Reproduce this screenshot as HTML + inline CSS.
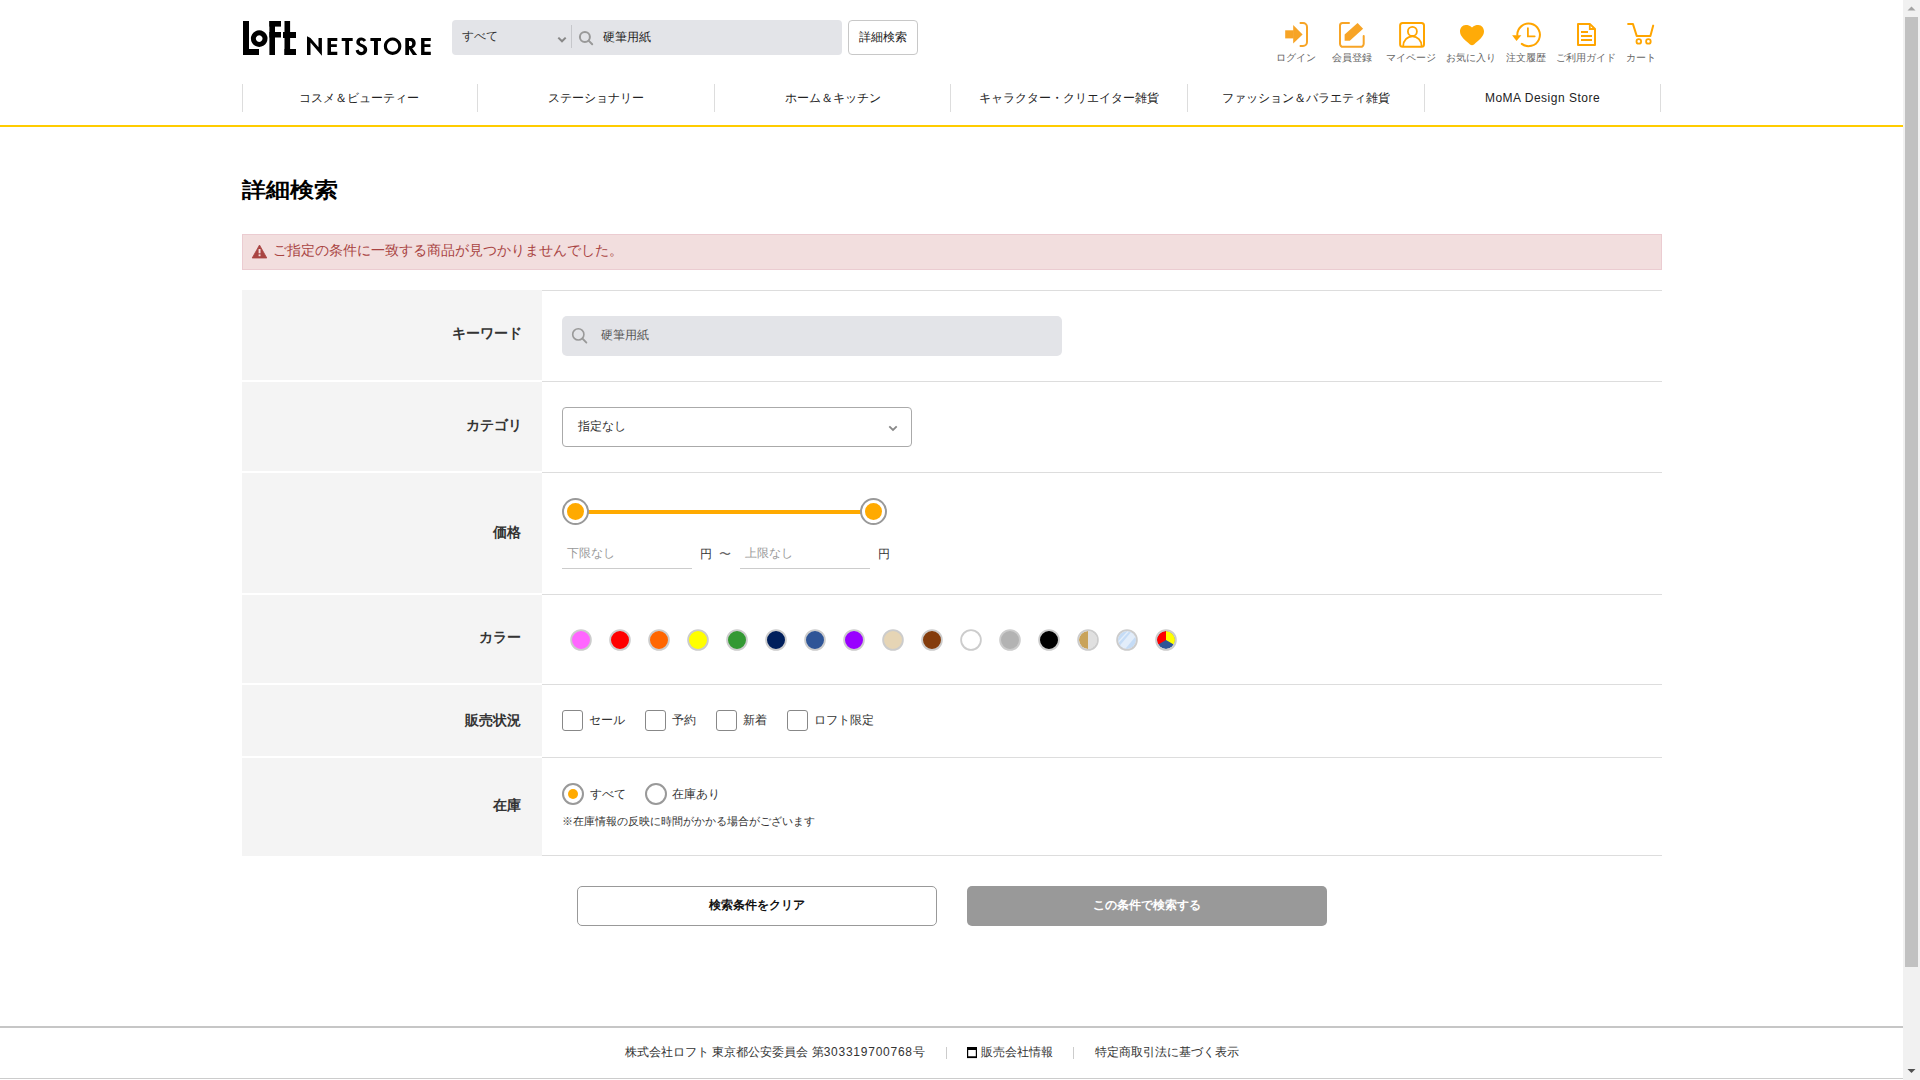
<!DOCTYPE html>
<html lang="ja">
<head>
<meta charset="utf-8">
<title>詳細検索 | ロフト公式通販サイト</title>
<style>
html,body{margin:0;padding:0;width:1920px;height:1080px;overflow:hidden;background:#fff;}
body{position:relative;font-family:"Liberation Sans",sans-serif;color:#333;}
.a{position:absolute;}
.t{position:absolute;white-space:nowrap;line-height:1;}
.c{text-align:center;}
svg{position:absolute;overflow:visible;}
</style>
</head>
<body>

<!-- ===== HEADER ===== -->
<svg id="logo" style="left:0;top:0" width="1" height="1">
  <g fill="#000">
    <!-- L -->
    <rect x="243" y="21" width="6" height="34"/>
    <rect x="243" y="49" width="16" height="6"/>
    <!-- o -->
    <path fill-rule="evenodd" d="M259.2,30.3a8.3,8.3 0 1 0 0.01,0z M259.2,35.3a3.3,3.3 0 1 1 -0.01,0z"/>
    <!-- F -->
    <rect x="269.4" y="21" width="5.6" height="34"/>
    <rect x="269.4" y="21" width="11.6" height="5.6"/>
    <rect x="269.4" y="32" width="11.6" height="5.5"/>
    <!-- t -->
    <rect x="284.5" y="21" width="5.6" height="34"/>
    <rect x="283" y="32" width="13" height="6"/>
    <rect x="284.5" y="49" width="11.5" height="6"/>
    <!-- N -->
    <path d="M307,36.3 L310.5,37.9 L318.5,47.3 V37.9 H321.9 V55.8 L310.5,42.6 V54.9 H307 Z"/>
    <!-- E -->
    <path d="M327.5,37.9 H337.3 V41 H331 V44.3 H336.8 V47.1 H331 V51.7 H337.3 V54.9 H327.5 Z"/>
    <!-- T -->
    <path d="M341.7,37.9 H352.7 V41.1 H349 V54.9 H345.3 V41.1 H341.7 Z"/>
    <!-- S -->
    <path d="M366.2,40.2 C364.8,38.4 363.2,37.5 361.3,37.5 C358.3,37.5 356.3,39.4 356.3,42 C356.3,44.5 358,45.6 360.6,46.7 C362.6,47.5 363.6,48.2 363.6,49.7 C363.6,51 362.6,52 361.3,52 C359.8,52 358.9,51 358.6,49.5 L355.6,50.4 C356.2,53.3 358.4,55.2 361.3,55.2 C364.8,55.2 367.2,53 367.2,49.6 C367.2,46.9 365.6,45.5 362.6,44.2 C360.6,43.4 359.9,42.8 359.9,41.9 C359.9,41.1 360.5,40.5 361.4,40.5 C362.3,40.5 363,40.9 363.7,41.8 Z"/>
    <!-- T -->
    <path d="M370.4,37.9 H381 V41.1 H377.9 V54.9 H374 V41.1 H370.4 Z"/>
    <!-- O -->
    <path fill-rule="evenodd" d="M392.6,37.5a8.75,8.7 0 1 0 0.01,0z M392.6,40.6a5.6,5.6 0 1 1 -0.01,0z"/>
    <!-- R -->
    <path fill-rule="evenodd" d="M405.3,37.9 H410.5 C413.8,37.9 415.7,39.9 415.7,43.2 C415.7,45.8 414.3,47.6 412.2,48.2 L417.2,54.9 H412.9 L409,49 V54.9 H405.3 Z M409,40.9 V46.1 H409.8 C411.5,46.1 412.2,45.2 412.2,43.5 C412.2,41.8 411.5,40.9 409.8,40.9 Z"/>
    <!-- E -->
    <path d="M421.1,37.9 H430.8 V41 H424.5 V44.3 H430.4 V46.9 H424.5 V51.7 H430.8 V54.9 H421.1 Z"/>
  </g>
</svg>

<div class="a" style="left:452px;top:20px;width:390px;height:35px;background:#e3e4e8;border-radius:4px;"></div>
<div class="t" id="h-all" style="left:462px;top:30px;font-size:12px;color:#333;">すべて</div>
<svg style="left:0;top:0" width="1" height="1">
  <path d="M558.3,37.6 L562,41.3 L565.7,37.6" fill="none" stroke="#888" stroke-width="2"/>
  <rect x="571" y="25" width="1" height="23" fill="#c6c7cb"/>
  <circle cx="584.9" cy="36.9" r="5" fill="none" stroke="#999" stroke-width="2"/>
  <path d="M588.6,40.6 L592.2,44.2" stroke="#999" stroke-width="2" stroke-linecap="round"/>
</svg>
<div class="t" id="h-kw" style="left:603px;top:31px;font-size:12px;color:#222;">硬筆用紙</div>

<div class="a" style="left:848px;top:20px;width:68px;height:33px;border:1px solid #c8c8c8;border-radius:4px;background:#fff;"></div>
<div class="t" id="h-btn" style="left:859px;top:31px;font-size:12px;color:#222;">詳細検索</div>

<!-- header icons -->
<svg style="left:0;top:0" width="1" height="1">
  <g fill="#f7a426">
    <rect x="1285.2" y="30.3" width="8.5" height="8.1"/>
    <path d="M1293.2,25 L1302.6,34.4 L1293.2,43.6 Z"/>
  </g>
  <path d="M1299.7,23 H1303 A4,4 0 0 1 1307,27 V41.9 A4,4 0 0 1 1303,45.9 H1299.7" fill="none" stroke="#f7a426" stroke-width="2"/>

  <path d="M1349,23 H1342.5 A2.5,2.5 0 0 0 1340,25.5 V43.8 A3,3 0 0 0 1343,46.8 H1360.7 A3,3 0 0 0 1363.7,43.8 V36" fill="none" stroke="#f7a426" stroke-width="2" stroke-linecap="round"/>
  <path d="M1344.6,34.6 L1357.6,23 L1363.1,28.8 L1349.8,40.7 L1344.6,40.7 Z" fill="#f7a426"/>

  <rect x="1400.1" y="23" width="23.9" height="23.8" rx="2.5" fill="none" stroke="#ffa500" stroke-width="2"/>
  <circle cx="1412.4" cy="31.4" r="4.5" fill="none" stroke="#ffa500" stroke-width="1.8"/>
  <path d="M1403.2,46 A9.2,9.7 0 0 1 1421.6,46" fill="none" stroke="#ffa500" stroke-width="1.8"/>

  <path d="M1472,27.6 C1470,25.6 1467.8,25 1465.8,25 C1462.2,25 1460,28.2 1460,31.6 C1460,36.2 1465,40.6 1470,44.4 Q1472,45.9 1474,44.4 C1479,40.6 1484,36.2 1484,31.6 C1484,28.2 1481.8,25 1478.2,25 C1476.2,25 1474,25.6 1472,27.6 Z" fill="#ffab08"/>

  <path d="M1517.3,35 A11.3,11.3 0 1 1 1521.8,43.9" fill="none" stroke="#ffa500" stroke-width="2" stroke-linecap="round"/>
  <path d="M1512.1,35.3 L1521.4,35.3 L1516.5,40.9 Z" fill="#ffa500"/>
  <path d="M1527.9,28.2 V36.3 H1534.7" fill="none" stroke="#ffa500" stroke-width="1.8" stroke-linecap="round"/>

  <path d="M1578,23.9 H1589.8 L1595,29 V44.9 H1578 Z" fill="none" stroke="#ffa500" stroke-width="2" stroke-linejoin="round"/>
  <path d="M1589.8,23.9 V29 H1595" fill="none" stroke="#ffa500" stroke-width="1.8"/>
  <g stroke="#ffa500" stroke-width="2">
    <path d="M1581,32 H1588"/><path d="M1581,36 H1592"/><path d="M1581,40 H1592"/>
  </g>

  <path d="M1628.1,23.9 H1632.9 L1636.7,35.9 H1650.4 L1653.2,25.6" fill="none" stroke="#ffa500" stroke-width="2" stroke-linejoin="round" stroke-linecap="round"/>
  <circle cx="1638.8" cy="41.4" r="2.3" fill="none" stroke="#ffa500" stroke-width="1.8"/>
  <circle cx="1648.4" cy="41.4" r="2.3" fill="none" stroke="#ffa500" stroke-width="1.8"/>
</svg>
<div class="t c" style="left:1256px;width:80px;top:53px;font-size:10px;color:#666;">ログイン</div>
<div class="t c" style="left:1312px;width:80px;top:53px;font-size:10px;color:#666;">会員登録</div>
<div class="t c" style="left:1371px;width:80px;top:53px;font-size:10px;color:#666;">マイページ</div>
<div class="t c" style="left:1431px;width:80px;top:53px;font-size:10px;color:#666;">お気に入り</div>
<div class="t c" style="left:1486px;width:80px;top:53px;font-size:10px;color:#666;">注文履歴</div>
<div class="t c" style="left:1546px;width:80px;top:53px;font-size:10px;color:#666;">ご利用ガイド</div>
<div class="t c" style="left:1601px;width:80px;top:53px;font-size:10px;color:#666;">カート</div>

<!-- NAV -->
<div class="a" style="left:242px;top:84px;width:1px;height:28px;background:#ddd;"></div>
<div class="a" style="left:477px;top:84px;width:1px;height:28px;background:#ddd;"></div>
<div class="a" style="left:714px;top:84px;width:1px;height:28px;background:#ddd;"></div>
<div class="a" style="left:950px;top:84px;width:1px;height:28px;background:#ddd;"></div>
<div class="a" style="left:1187px;top:84px;width:1px;height:28px;background:#ddd;"></div>
<div class="a" style="left:1424px;top:84px;width:1px;height:28px;background:#ddd;"></div>
<div class="a" style="left:1660px;top:84px;width:1px;height:28px;background:#ddd;"></div>
<div class="t c" style="left:241px;width:236px;top:92px;font-size:12px;color:#222;">コスメ＆ビューティー</div>
<div class="t c" style="left:477px;width:238px;top:92px;font-size:12px;color:#222;">ステーショナリー</div>
<div class="t c" style="left:714px;width:237px;top:92px;font-size:12px;color:#222;">ホーム＆キッチン</div>
<div class="t c" style="left:950px;width:238px;top:92px;font-size:12px;color:#222;">キャラクター・クリエイター雑貨</div>
<div class="t c" style="left:1187px;width:238px;top:92px;font-size:12px;color:#222;">ファッション＆バラエティ雑貨</div>
<div class="t c" style="left:1424px;width:237px;top:92px;font-size:12px;color:#222;letter-spacing:0.5px;">MoMA Design Store</div>
<div class="a" style="left:0;top:125px;width:1903px;height:2px;background:#ffcc00;"></div>

<!-- TITLE -->
<div class="t" id="title" style="left:242px;top:179px;font-size:24px;font-weight:bold;color:#000;transform:scaleY(0.875);transform-origin:0 0;">詳細検索</div>

<!-- ALERT -->
<div class="a" style="left:242px;top:234px;width:1418px;height:34px;background:#f2dede;border:1px solid #ebccd1;"></div>
<svg style="left:0;top:0" width="1" height="1">
  <path d="M259.5,245 L266.8,258 H252.2 Z" fill="#a94442" stroke="#a94442" stroke-width="0.8" stroke-linejoin="round"/>
  <rect x="258.6" y="249" width="1.9" height="4.3" fill="#f2dede"/>
  <rect x="258.6" y="254.4" width="1.9" height="1.8" fill="#f2dede"/>
</svg>
<div class="t" id="alert" style="left:273px;top:243px;font-size:14px;color:#a94442;">ご指定の条件に一致する商品が見つかりませんでした。</div>

<!-- TABLE -->
<div class="a" style="left:242px;top:290px;width:300px;height:90px;background:#f4f4f4;"></div>
<div class="a" style="left:242px;top:382px;width:300px;height:89px;background:#f4f4f4;"></div>
<div class="a" style="left:242px;top:473px;width:300px;height:120px;background:#f4f4f4;"></div>
<div class="a" style="left:242px;top:595px;width:300px;height:88px;background:#f4f4f4;"></div>
<div class="a" style="left:242px;top:685px;width:300px;height:71px;background:#f4f4f4;"></div>
<div class="a" style="left:242px;top:758px;width:300px;height:98px;background:#f4f4f4;"></div>
<div class="a" style="left:542px;top:290px;width:1120px;height:1px;background:#ddd;"></div>
<div class="a" style="left:542px;top:381px;width:1120px;height:1px;background:#ddd;"></div>
<div class="a" style="left:542px;top:472px;width:1120px;height:1px;background:#ddd;"></div>
<div class="a" style="left:542px;top:594px;width:1120px;height:1px;background:#ddd;"></div>
<div class="a" style="left:542px;top:684px;width:1120px;height:1px;background:#ddd;"></div>
<div class="a" style="left:542px;top:757px;width:1120px;height:1px;background:#ddd;"></div>
<div class="a" style="left:542px;top:855px;width:1120px;height:1px;background:#ddd;"></div>
<div class="t" style="right:1398px;top:326px;font-size:14px;font-weight:bold;color:#333;text-align:right;">キーワード</div>
<div class="t" style="right:1398px;top:418px;font-size:14px;font-weight:bold;color:#333;text-align:right;">カテゴリ</div>
<div class="t" style="right:1399px;top:525px;font-size:14px;font-weight:bold;color:#333;text-align:right;">価格</div>
<div class="t" style="right:1399px;top:630px;font-size:14px;font-weight:bold;color:#333;text-align:right;">カラー</div>
<div class="t" style="right:1399px;top:713px;font-size:14px;font-weight:bold;color:#333;text-align:right;">販売状況</div>
<div class="t" style="right:1399px;top:798px;font-size:14px;font-weight:bold;color:#333;text-align:right;">在庫</div>

<!-- ROW1 keyword -->
<div class="a" style="left:562px;top:316px;width:500px;height:40px;background:#e3e4e8;border-radius:5px;"></div>
<svg style="left:0;top:0" width="1" height="1">
  <circle cx="578.3" cy="334.4" r="5.6" fill="none" stroke="#999" stroke-width="1.6"/>
  <path d="M582.4,338.5 L586.4,342.6" stroke="#999" stroke-width="1.8" stroke-linecap="round"/>
</svg>
<div class="t" id="kw2" style="left:601px;top:329px;font-size:12px;color:#555;">硬筆用紙</div>

<!-- ROW2 category -->
<div class="a" style="left:562px;top:407px;width:348px;height:38px;border:1px solid #aaa;border-radius:4px;background:#fff;"></div>
<div class="t" id="cat" style="left:578px;top:420px;font-size:12px;color:#333;">指定なし</div>
<svg style="left:0;top:0" width="1" height="1">
  <path d="M889.3,426.3 L893,430 L896.7,426.3" fill="none" stroke="#888" stroke-width="1.8"/>
</svg>

<!-- ROW3 price -->
<div class="a" style="left:575px;top:510px;width:299px;height:4px;background:#ffaa00;"></div>
<div class="a" style="left:562px;top:498px;width:23px;height:23px;border:2px solid #999;border-radius:50%;background:#fff;"></div>
<div class="a" style="left:567px;top:503px;width:17px;height:17px;border-radius:50%;background:#ffaa00;"></div>
<div class="a" style="left:860px;top:498px;width:23px;height:23px;border:2px solid #999;border-radius:50%;background:#fff;"></div>
<div class="a" style="left:865px;top:503px;width:17px;height:17px;border-radius:50%;background:#ffaa00;"></div>
<div class="a" style="left:562px;top:568px;width:130px;height:1px;background:#ccc;"></div>
<div class="a" style="left:740px;top:568px;width:130px;height:1px;background:#ccc;"></div>
<div class="t" id="pmin" style="left:567px;top:547px;font-size:12px;color:#999;">下限なし</div>
<div class="t" style="left:700px;top:548px;font-size:12px;color:#333;">円</div>
<div class="t" style="left:719px;top:548px;font-size:12px;color:#666;">〜</div>
<div class="t" id="pmax" style="left:745px;top:547px;font-size:12px;color:#999;">上限なし</div>
<div class="t" style="left:878px;top:548px;font-size:12px;color:#333;">円</div>

<!-- ROW4 colors -->
<svg style="left:0;top:0" width="1" height="1">
  <defs>
    <clipPath id="sw14"><circle cx="1088" cy="640" r="9"/></clipPath>
    <clipPath id="sw15"><circle cx="1127" cy="640" r="9"/></clipPath>
    <clipPath id="sw16"><circle cx="1166" cy="640" r="9"/></clipPath>
  </defs>
  <g stroke="#cccccc" stroke-width="1.8">
    <circle cx="581" cy="640" r="9.9" fill="#ff66ff"/>
    <circle cx="620" cy="640" r="9.9" fill="#ff0000"/>
    <circle cx="659" cy="640" r="9.9" fill="#ff6600"/>
    <circle cx="698" cy="640" r="9.9" fill="#ffff00"/>
    <circle cx="737" cy="640" r="9.9" fill="#339933"/>
    <circle cx="776" cy="640" r="9.9" fill="#001f5c"/>
    <circle cx="815" cy="640" r="9.9" fill="#2f5597"/>
    <circle cx="854" cy="640" r="9.9" fill="#9900ff"/>
    <circle cx="893" cy="640" r="9.9" fill="#e6d5b5"/>
    <circle cx="932" cy="640" r="9.9" fill="#843c0c"/>
    <circle cx="971" cy="640" r="9.9" fill="#ffffff"/>
    <circle cx="1010" cy="640" r="9.9" fill="#b3b3b3"/>
    <circle cx="1049" cy="640" r="9.9" fill="#000000"/>
  </g>
  <g clip-path="url(#sw14)">
    <rect x="1078" y="630" width="10" height="20" fill="#c9a35a"/>
    <rect x="1088" y="630" width="10" height="20" fill="#e0e0e0"/>
  </g>
  <g clip-path="url(#sw15)">
    <rect x="1117" y="630" width="20" height="20" fill="#c5dcf6"/>
    <path d="M1110,651 L1137,622" stroke="#e4eefa" stroke-width="1.4"/>
    <path d="M1112.6,659.2 L1143.6,621.9" stroke="#e2edfa" stroke-width="6.3"/>
  </g>
  <g clip-path="url(#sw16)">
    <rect x="1156" y="630" width="20" height="20" fill="#2f5597"/>
    <path d="M1166,640 L1166,628 L1154,628 L1154,647 Z" fill="#ff0000"/>
    <path d="M1166,640 L1166,628 L1178,628 L1178,647 Z" fill="#ffff00"/>
  </g>
  <g fill="none" stroke="#cccccc" stroke-width="1.8">
    <circle cx="1088" cy="640" r="9.9"/>
    <circle cx="1127" cy="640" r="9.9"/>
    <circle cx="1166" cy="640" r="9.9"/>
  </g>
</svg>

<!-- ROW5 checkboxes -->
<div class="a" style="left:562px;top:710px;width:19px;height:19px;border:1px solid #888;border-radius:3px;background:#fff;"></div>
<div class="a" style="left:645px;top:710px;width:19px;height:19px;border:1px solid #888;border-radius:3px;background:#fff;"></div>
<div class="a" style="left:716px;top:710px;width:19px;height:19px;border:1px solid #888;border-radius:3px;background:#fff;"></div>
<div class="a" style="left:787px;top:710px;width:19px;height:19px;border:1px solid #888;border-radius:3px;background:#fff;"></div>
<div class="t" id="cb1" style="left:589px;top:714px;font-size:12px;color:#333;">セール</div>
<div class="t" style="left:672px;top:714px;font-size:12px;color:#333;">予約</div>
<div class="t" style="left:743px;top:714px;font-size:12px;color:#333;">新着</div>
<div class="t" style="left:814px;top:714px;font-size:12px;color:#333;">ロフト限定</div>

<!-- ROW6 stock -->
<div class="a" style="left:562px;top:783px;width:18px;height:18px;border:2px solid #999;border-radius:50%;background:#fff;"></div>
<div class="a" style="left:568px;top:789px;width:10px;height:10px;border-radius:50%;background:#ffaa00;"></div>
<div class="a" style="left:645px;top:783px;width:18px;height:18px;border:2px solid #999;border-radius:50%;background:#fff;"></div>
<div class="t" id="rd1" style="left:590px;top:788px;font-size:12px;color:#333;">すべて</div>
<div class="t" style="left:672px;top:788px;font-size:12px;color:#333;">在庫あり</div>
<div class="t" id="note" style="left:562px;top:816px;font-size:11px;color:#333;">※在庫情報の反映に時間がかかる場合がございます</div>

<!-- BUTTONS -->
<div class="a" style="left:577px;top:886px;width:358px;height:38px;border:1px solid #999;border-radius:5px;background:#fff;"></div>
<div class="t c" id="btn1" style="left:577px;width:360px;top:899px;font-size:12px;font-weight:bold;color:#111;">検索条件をクリア</div>
<div class="a" style="left:967px;top:886px;width:360px;height:40px;border-radius:5px;background:#999;"></div>
<div class="t c" id="btn2" style="left:967px;width:360px;top:899px;font-size:12px;font-weight:bold;color:#fff;">この条件で検索する</div>

<!-- FOOTER -->
<div class="a" style="left:0;top:1026px;width:1903px;height:2px;background:#c6c6c6;"></div>
<div class="t" id="ft1" style="left:625px;top:1046px;font-size:12px;color:#333;">株式会社ロフト 東京都公安委員会 第<span style="letter-spacing:0.75px">303319700768</span>号</div>
<div class="a" style="left:946px;top:1047px;width:1px;height:12px;background:#ccc;"></div>
<svg style="left:0;top:0" width="1" height="1">
  <rect x="967.6" y="1047.6" width="8.8" height="9.9" fill="none" stroke="#000" stroke-width="1.2"/>
  <rect x="967" y="1047" width="10" height="3" fill="#000"/>
  <rect x="967" y="1056.3" width="10" height="1.7" fill="#000"/>
</svg>
<div class="t" style="left:981px;top:1046px;font-size:12px;color:#333;">販売会社情報</div>
<div class="a" style="left:1073px;top:1047px;width:1px;height:12px;background:#ccc;"></div>
<div class="t" style="left:1095px;top:1046px;font-size:12px;color:#333;">特定商取引法に基づく表示</div>
<div class="a" style="left:0;top:1078px;width:1903px;height:1px;background:#ccc;"></div>

<!-- SCROLLBAR -->
<div class="a" style="left:1903px;top:0;width:17px;height:1080px;background:#f1f1f1;"></div>
<div class="a" style="left:1905px;top:17px;width:13px;height:950px;background:#c1c1c1;"></div>
<svg style="left:0;top:0" width="1" height="1">
  <path d="M1907.5,10.5 L1911.5,6.5 L1915.5,10.5 Z" fill="#a3a3a3"/>
  <path d="M1907.5,1069 L1911.5,1073 L1915.5,1069 Z" fill="#505050"/>
</svg>

</body>
</html>
